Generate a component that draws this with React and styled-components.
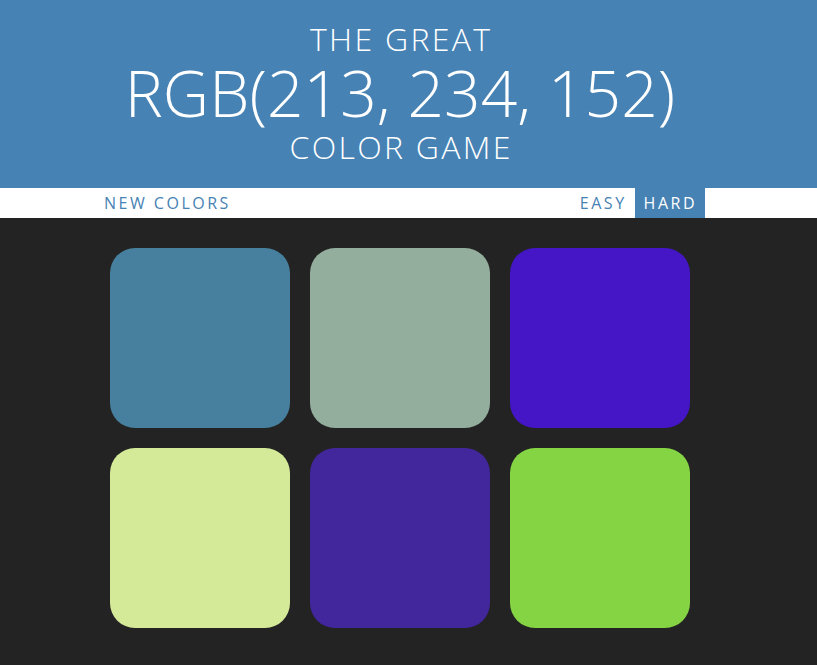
import React, { useState } from 'react';
import styled, { createGlobalStyle } from 'styled-components';

const GlobalStyle = createGlobalStyle`
  body {
    margin: 0;
    background-color: #232323;
    font-family: "Open Sans", "Liberation Sans", sans-serif;
  }
`;

const COLORS = [
  'rgb(71, 128, 159)',
  'rgb(148, 174, 158)',
  'rgb(69, 22, 197)',
  'rgb(213, 234, 152)',
  'rgb(66, 38, 156)',
  'rgb(132, 212, 68)',
];

const App = () => {
  const [mode, setMode] = useState('hard');

  return (
    <Page>
      <GlobalStyle />
      <Header>
        <Column>
          <Small>The Great</Small>
          <Target>RGB(213, 234, 152)</Target>
          <Small>Color Game</Small>
        </Column>
      </Header>
      <Stripe>
        <StripeInner>
          <StripeButton>New Colors</StripeButton>
          <Modes>
            <StripeButton isSelected={mode === 'easy'} onClick={() => setMode('easy')}>Easy</StripeButton>
            <StripeButton isSelected={mode === 'hard'} onClick={() => setMode('hard')}>Hard</StripeButton>
          </Modes>
        </StripeInner>
      </Stripe>
      <Grid>
        { COLORS.map((c) => (
          <Square key={c} style={{ backgroundColor: c }} />
        )) }
      </Grid>
    </Page>
  );
};

export default App;


const Page = styled.div`
  min-height: 665px;
  background-color: #232323;
`;

const Header = styled.header`
  background-color: steelblue;
  color: #fff;
  height: 188px;
  box-sizing: border-box;
  padding-top: 20px;
`;

const Column = styled.div`
  width: 800px;
  display: flex;
  flex-direction: column;
  align-items: center;
  text-align: center;
`;

const Small = styled.div`
  font-size: 32px;
  font-weight: 300;
  line-height: 37px;
  text-transform: uppercase;
  letter-spacing: 2.3px;
  margin-right: -2.3px;
`;

const Target = styled.div`
  font-size: 64px;
  font-weight: 300;
  line-height: 71px;
  letter-spacing: 0.1px;
`;

const Stripe = styled.div`
  background-color: #fff;
  height: 30px;
`;

const StripeInner = styled.div`
  width: 610px;
  height: 100%;
  margin-left: 95px;
  display: flex;
  justify-content: space-between;
`;

const Modes = styled.div`
  display: flex;
`;

const StripeButton = styled.button`
  border: none;
  outline: none;
  height: 100%;
  padding: 0 8px 0 9px;
  font-family: inherit;
  font-size: 16px;
  letter-spacing: 2.5px;
  text-transform: uppercase;
  cursor: pointer;
  background: ${({ isSelected }) => isSelected ? 'steelblue' : 'transparent'};
  color: ${({ isSelected }) => isSelected ? '#fff' : 'steelblue'};
`;

const Grid = styled.div`
  width: 600px;
  margin: 20px 0 0 100px;
  display: flex;
  flex-wrap: wrap;
`;

const Square = styled.div`
  width: 180px;
  height: 180px;
  margin: 10px;
  border-radius: 25px;
`;
